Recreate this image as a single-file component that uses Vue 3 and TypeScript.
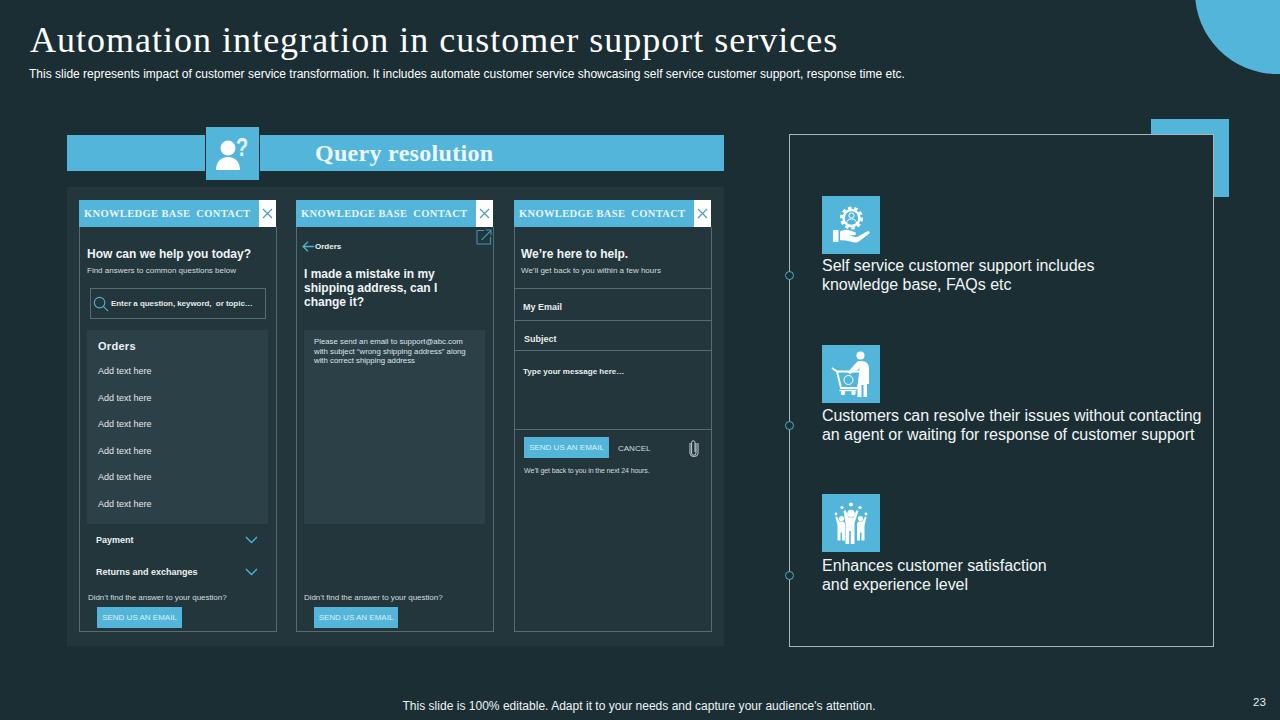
<script setup lang="ts">
const rows: string[] = Array(6).fill('Add text here')
const features = [
  { id: 'hand', lines: ['Self service customer support includes', 'knowledge base, FAQs etc'] },
  { id: 'cart', lines: ['Customers can resolve their issues without contacting', 'an agent or waiting for response of customer support'] },
  { id: 'team', lines: ['Enhances customer satisfaction', 'and experience level'] },
]
</script>

<template>
  <div class="slide">
    <div class="circle"></div>
    <header class="head">
      <h1>Automation integration in customer support services</h1>
      <p>This slide represents impact of customer service transformation. It includes automate customer service showcasing self service customer support, response time etc.</p>
    </header>

    <main class="main">
      <section class="left">
        <div class="banner">
          <div class="qicon">
            <svg width="53" height="53" viewBox="0 0 53 53">
              <circle cx="22" cy="21" r="7.500" fill="#fff" />
              <path d="M10 43c0-8 5-13 12-13s12 5 12 13z" fill="#fff" />
            </svg>
            <span class="q">?</span>
          </div>
          <h2>Query resolution</h2>
        </div>
        <div class="panel">
          <!-- phone 1 -->
          <article class="phone">
            <div class="phead">
              <span>KNOWLEDGE BASE&nbsp; CONTACT</span>
              <b class="close"><svg width="11" height="11" viewBox="0 0 11 11"><path d="M1 1l9 9M10 1l-9 9" stroke="#4a9db8" stroke-width="1.200" /></svg></b>
            </div>
            <div class="pbody one">
              <h3>How can we help you today?</h3>
              <p class="small">Find answers to common questions below</p>
              <div class="search">
                <svg width="16" height="16" viewBox="0 0 17 17" fill="none" stroke="#4fb0d0" stroke-width="1.200"><circle cx="7" cy="7" r="5.600" /><path d="M11 11l5 5" /></svg>
                <span>Enter a question, keyword,&nbsp; or topic…</span>
              </div>
              <div class="faq">
                <h4>Orders</h4>
                <div class="faq-rows"><span v-for="(r, i) in rows" :key="i">{{ r }}</span></div>
              </div>
              <div class="acc">
                <span>Payment</span>
                <svg width="13" height="8" viewBox="0 0 13 8" fill="none" stroke="#4fb0d0" stroke-width="1.400"><path d="M1 1l5.500 5.500L12 1" /></svg>
              </div>
              <div class="acc second">
                <span>Returns and exchanges</span>
                <svg width="13" height="8" viewBox="0 0 13 8" fill="none" stroke="#4fb0d0" stroke-width="1.400"><path d="M1 1l5.500 5.500L12 1" /></svg>
              </div>
              <p class="didnt">Didn’t find the answer to your question?</p>
              <button class="send offset">SEND US AN EMAIL</button>
            </div>
          </article>

          <!-- phone 2 -->
          <article class="phone">
            <div class="phead">
              <span>KNOWLEDGE BASE&nbsp; CONTACT</span>
              <b class="close"><svg width="11" height="11" viewBox="0 0 11 11"><path d="M1 1l9 9M10 1l-9 9" stroke="#4a9db8" stroke-width="1.200" /></svg></b>
            </div>
            <div class="pbody two">
              <svg class="ext" width="16" height="16" viewBox="0 0 16 16" fill="none" stroke="#3f93b0" stroke-width="1.100"><path d="M8 1.500H1v13.500h13.500V8M5.500 11L15 1.500M9.500 1H15v5.500" /></svg>
              <div class="back">
                <svg width="12" height="11" viewBox="0 0 12 11" fill="none" stroke="#4fb0d0" stroke-width="1.300"><path d="M12 5.500H1M6 .8L1 5.500l5 4.700" /></svg>
                <span>Orders</span>
              </div>
              <h3 class="q-title">I made a mistake in my<br />shipping address, can I<br />change it?</h3>
              <div class="answer">Please send an email to support@abc.com<br />with subject “wrong shipping address” along<br />with correct shipping address</div>
              <p class="didnt">Didn’t find the answer to your question?</p>
              <button class="send offset">SEND US AN EMAIL</button>
            </div>
          </article>

          <!-- phone 3 -->
          <article class="phone">
            <div class="phead">
              <span>KNOWLEDGE BASE&nbsp; CONTACT</span>
              <b class="close"><svg width="11" height="11" viewBox="0 0 11 11"><path d="M1 1l9 9M10 1l-9 9" stroke="#4a9db8" stroke-width="1.200" /></svg></b>
            </div>
            <div class="pbody three">
              <div class="f intro">
                <h3>We’re here to help.</h3>
                <p class="small">We’ll get back to you within a few hours</p>
              </div>
              <div class="f email">My Email</div>
              <div class="f subject">Subject</div>
              <div class="f msg">Type your message here…</div>
              <div class="actions">
                <button class="send">SEND US AN EMAIL</button>
                <span class="cancel">CANCEL</span>
                <svg class="clip" width="10" height="18" viewBox="0 0 10 18" fill="none" stroke="#c9d3d6" stroke-width="1"><path d="M7 4v10a2.200 2.200 0 0 1-4.400 0V3.500a1.700 1.700 0 0 1 3.400 0V13" /><path d="M9 4v10.500a4 3 0 0 1-8 0V4" /></svg>
              </div>
              <p class="later">We’ll get back to you in the next 24 hours.</p>
            </div>
          </article>
        </div>
      </section>

      <section class="right">
        <div class="corner"></div>
        <div class="box">
          <div v-for="f in features" :key="f.id" class="feat">
            <i class="dot"></i>
            <div class="ficon">
              <svg v-if="f.id === 'hand'" width="58" height="58" viewBox="0 0 58 58">
                <g fill="none" stroke="#fff">
                  <circle cx="29.500" cy="22" r="10" stroke-width="3" stroke-dasharray="3.400 2.800" />
                  <circle cx="29.500" cy="22" r="8" stroke-width="2.400" />
                </g>
                <circle cx="29.500" cy="19.500" r="2.600" fill="none" stroke="#fff" stroke-width="1" />
                <path d="M24.500 27.500c0-3 2.200-4.500 5-4.500s5 1.500 5 4.500" fill="none" stroke="#fff" stroke-width="1" />
                <path d="M11 34h5.500v12H11zM18 35.500c3.500-2 7-2.500 10-1l4.500 1.500c2.500.8 1.500 3.800-1 3.300l-5-.8 6 2.500c1.500.4 2.500 0 3.500-.5l9-5c2-1 3.500.8 2 2.300l-9.500 7.200c-2 1.500-4 1.700-6 1.300l-8-1.800-5.500-.3z" fill="#fff" />
              </svg>
              <svg v-else-if="f.id === 'cart'" width="58" height="58" viewBox="0 0 58 58">
                <circle cx="38.500" cy="10.500" r="4" fill="#fff" />
                <path d="M36 16h4c4 0 7 3 7 7v16h-2v13h-3.500V40h-2v12h-4V43l2-20-2 2-7.500 4-2.500-1.500L33 19z" fill="#fff" />
                <path d="M10 23l5 3.500h24L36 43H19l-4-16.500" fill="none" stroke="#fff" stroke-width="1.900" />
                <path d="M17.500 45.500h17" stroke="#fff" stroke-width="1.400" />
                <circle cx="26.500" cy="35" r="4.500" fill="none" stroke="#fff" stroke-width="1" />
                <circle cx="21" cy="48" r="2.200" fill="#fff" />
                <circle cx="31.500" cy="48" r="2.200" fill="#fff" />
              </svg>
              <svg v-else width="58" height="58" viewBox="0 0 58 58" fill="#fff">
                <circle cx="29" cy="10.500" r="2" />
                <circle cx="20" cy="13.500" r="1.600" />
                <circle cx="38" cy="13.500" r="1.600" />
                <circle cx="14" cy="20" r="1.400" />
                <circle cx="44" cy="20" r="1.400" />
                <circle cx="19.500" cy="24.500" r="2.600" />
                <circle cx="38.500" cy="24.500" r="2.600" />
                <path d="M13.500 23l1.500-.5 2.500 5h4l1.500 2v17h-3v-8h-1.500v8h-3V31.500z" />
                <path d="M44.500 23l-1.500-.5-2.500 5h-4l-1.500 2v17h3v-8h1.500v8h3V31.500z" />
                <path d="M21.500 17l2-1 3 7.500h5l3-7.500 2 1-4 12v21h-3.700V37h-1.600v13H23.500V29z" stroke="#52b5d9" stroke-width="1" paint-order="stroke" />
                <circle cx="29" cy="19.500" r="3.800" />
              </svg>
            </div>
            <p><span v-for="l in f.lines" :key="l">{{ l }}</span></p>
          </div>
        </div>
      </section>
    </main>

    <footer class="foot">This slide is 100% editable. Adapt it to your needs and capture your audience's attention.</footer>
    <span class="page">23</span>
  </div>
</template>

<style>
html, body { margin: 0; background: #1a2e34; }
</style>

<style scoped>
.slide {
  position: relative;
  width: 1280px;
  height: 720px;
  overflow: hidden;
  background: #1a2e34;
  color: #fff;
  font-family: "Liberation Sans", Arial, sans-serif;
  display: flex;
  flex-direction: column;
}
.circle {
  position: absolute;
  left: 1195px;
  top: -90px;
  width: 164px;
  height: 164px;
  border-radius: 50%;
  background: #52b5d9;
}
h1, h2, h3, h4, p { margin: 0; font-weight: normal; }
button { border: 0; font-family: inherit; padding: 0; }

.head { padding: 21px 0 0 29px; height: 127px; box-sizing: border-box; }
.head h1 {
  font-family: "Liberation Serif", "Times New Roman", serif;
  font-size: 36px;
  line-height: 38px;
  letter-spacing: 1.010px;
  margin-left: 1px;
}
.head p { font-size: 12px; line-height: 14px; margin-top: 8px; letter-spacing: 0.005px; }

.main { display: flex; align-items: flex-start; padding: 1px 0 0 67px; gap: 65px; }

.left { width: 657px; padding-top: 7px; }
.banner {
  position: relative;
  height: 36px;
  background: #52b5d9;
  display: flex;
  align-items: center;
  padding-left: 248px;
}
.banner h2 {
  font-family: "Liberation Serif", serif;
  font-weight: bold;
  font-size: 24px;
  letter-spacing: 0.3px;
  color: #eef8fb;
}
.qicon {
  position: absolute;
  left: 139px;
  top: -8px;
  width: 53px;
  height: 53px;
  background: #52b5d9;
  box-shadow: 0 0 0 1px #1a2e34;
}
.qicon svg { display: block; }
.q {
  position: absolute;
  left: 30px;
  top: 6px;
  font-size: 25px;
  line-height: 28px;
  font-weight: bold;
  color: #e6f5fa;
  transform: scaleX(0.8);
  transform-origin: left center;
}
.panel {
  margin-top: 16px;
  height: 459px;
  box-sizing: border-box;
  background: #22363c;
  padding: 13px 12px 14px;
  display: grid;
  grid-template-columns: 217px 218px 198px;
}
.phone { display: flex; flex-direction: column; height: 432px; width: 198px; }
.phead {
  height: 27px;
  flex: none;
  background: #52b5d9;
  display: flex;
  align-items: center;
  justify-content: space-between;
  padding-left: 5px;
  margin-right: 1px;
}
.phead span {
  font-family: "Liberation Serif", serif;
  font-weight: bold;
  font-size: 10.500px;
  white-space: nowrap;
  letter-spacing: 0.36px;
  color: #eaf6fa;
}
.close {
  width: 17px;
  height: 27px;
  background: #fff;
  display: flex;
  align-items: center;
  justify-content: center;
}
.pbody {
  position: relative;
  flex: 1;
  border: 1px solid #566c72;
  border-top: 0;
  display: flex;
  flex-direction: column;
  min-height: 0;
}
h3 { font-size: 12px; line-height: 14px; font-weight: bold; color: #f1f4f5; }
.small { font-size: 8px; line-height: 10px; color: #d5dcde; }

.one { padding: 20px 8px 0; }
.one h3 { margin-left: -1px; }
.one .small { margin-top: 5px; margin-left: -1px; }
.search {
  margin: 12px 2px 0 2px;
  height: 31px;
  box-sizing: border-box;
  border: 1px solid #566c72;
  display: flex;
  align-items: center;
  padding-left: 2px;
  gap: 2px;
}
.search span { font-size: 8px; font-weight: bold; color: #e4e9ea; white-space: nowrap; letter-spacing: -0.05px; }
.faq {
  margin: 11px 0 0 -1px;
  height: 194px;
  box-sizing: border-box;
  background: #2c4047;
  padding: 10px 11px 0;
}
.faq h4 { font-size: 11px; line-height: 13px; font-weight: bold; color: #eef1f2; letter-spacing: 0.3px; }
.faq-rows {
  margin-top: 13px;
  display: grid;
  grid-auto-rows: 26.600px;
  font-size: 9px;
  line-height: 11px;
  color: #e4e9ea;
}
.acc {
  margin: 9px 10px 0 8px;
  height: 14px;
  display: flex;
  align-items: center;
  justify-content: space-between;
  font-size: 9px;
  font-weight: bold;
  color: #edf1f2;
}
.acc.second { margin-top: 18px; }
.didnt { font-size: 8px; line-height: 10px; color: #d5dcde; margin-top: auto; margin-bottom: 4px; letter-spacing: -0.05px; }
.send {
  width: 85px;
  height: 21px;
  background: #52b5d9;
  color: #dff2f8;
  font-size: 8px;
  flex: none;
  white-space: nowrap;
}
.offset { margin-left: 9px; margin-bottom: 3px; }
.two .offset { margin-left: 10px; width: 84px; }

.two { padding: 13px 8px 0 7px; }
.ext { position: absolute; right: 1px; top: 2px; }
.back { display: flex; align-items: center; gap: 1px; margin: 0 0 0 -2px; height: 12px; font-size: 8px; font-weight: bold; color: #eef1f2; }
.q-title { margin-top: 15px; line-height: 14px; }
.answer {
  margin-top: 21px;
  height: 194px;
  box-sizing: border-box;
  background: #2c4047;
  padding: 7px 9px 0 10px;
  font-size: 7.800px;
  line-height: 9.500px;
  color: #dfe5e7;
  white-space: nowrap;
}

.f { border-bottom: 1px solid #566c72; box-sizing: border-box; color: #e8ecee; font-weight: bold; }
.intro { height: 62px; padding: 20px 6px 0; font-weight: normal; }
.intro .small { margin-top: 5px; }
.email { height: 32px; padding: 12px 8px 0; font-size: 9px; line-height: 12px; }
.subject { height: 30px; padding: 12px 9px 0; font-size: 9px; line-height: 12px; }
.msg { height: 79px; padding: 15px 8px 0; font-size: 8px; line-height: 11px; }
.actions { display: flex; align-items: center; margin: 7px 0 0 9px; padding-right: 12px; }
.cancel { font-size: 8px; margin-left: 9px; color: #d5dcde; padding-top: 1px; }
.clip { margin-left: auto; }
.later { font-size: 7px; line-height: 9px; color: #d5dcde; margin: 8px 0 0 9px; letter-spacing: -0.1px; }

.right { position: relative; width: 425px; padding-top: 6px; }
.corner {
  position: absolute;
  left: 362px;
  top: -9px;
  width: 78px;
  height: 78px;
  background: #52b5d9;
}
.box {
  position: relative;
  width: 425px;
  height: 513px;
  box-sizing: border-box;
  border: 1px solid #aab6b9;
  background: #1a2e34;
  padding: 61px 0 0 32px;
  display: flex;
  flex-direction: column;
  gap: 50px;
}
.feat { position: relative; height: 100px; }
.dot {
  position: absolute;
  left: -37px;
  top: 74.500px;
  width: 7px;
  height: 7px;
  border: 1px solid #4fb0d0;
  border-radius: 50%;
  background: #1a2e34;
}
.ficon { width: 58px; height: 58px; background: #52b5d9; }
.ficon svg { display: block; }
.feat:nth-child(2) .ficon { margin-top: -1px; margin-bottom: 1px; }
.feat:nth-child(3) .ficon { margin-top: -2px; margin-bottom: 2px; }
.feat p {
  padding-top: 2px;
  font-size: 16px;
  line-height: 19px;
  color: #f3f6f7;
  white-space: nowrap;
  letter-spacing: -0.04px;
}
.feat p span { display: block; }

.foot {
  position: absolute;
  left: 0;
  width: 1278px;
  top: 699px;
  text-align: center;
  font-size: 12px;
  line-height: 14px;
  letter-spacing: 0.02px;
  color: #f0f3f4;
}
.page {
  position: absolute;
  left: 1253px;
  top: 695px;
  font-size: 11.500px;
  line-height: 14px;
  color: #e8ecee;
}
</style>
